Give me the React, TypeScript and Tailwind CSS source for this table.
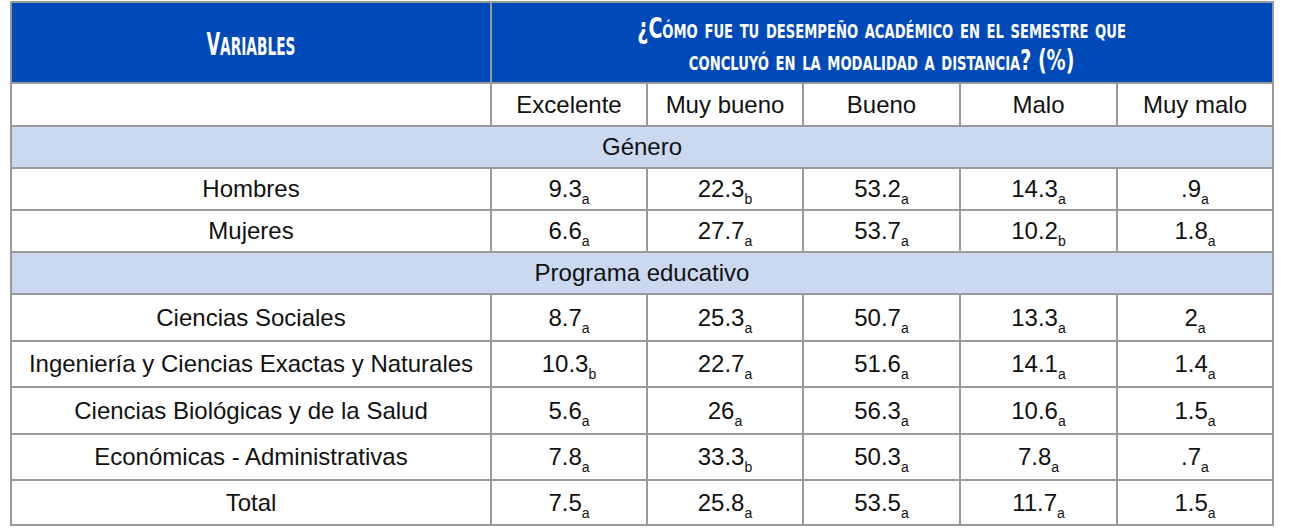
import React from 'react';

type Cell = [string, string];

interface Row {
  label: string;
  values: Cell[];
  h: string;
}

const head = ['Excelente', 'Muy bueno', 'Bueno', 'Malo', 'Muy malo'];

const genero: Row[] = [
  { label: 'Hombres', h: 'h-[42px]', values: [['9.3', 'a'], ['22.3', 'b'], ['53.2', 'a'], ['14.3', 'a'], ['.9', 'a']] },
  { label: 'Mujeres', h: 'h-[42px]', values: [['6.6', 'a'], ['27.7', 'a'], ['53.7', 'a'], ['10.2', 'b'], ['1.8', 'a']] },
];

const programa: Row[] = [
  { label: 'Ciencias Sociales', h: 'h-[47px]', values: [['8.7', 'a'], ['25.3', 'a'], ['50.7', 'a'], ['13.3', 'a'], ['2', 'a']] },
  { label: 'Ingeniería y Ciencias Exactas y Naturales', h: 'h-[46px]', values: [['10.3', 'b'], ['22.7', 'a'], ['51.6', 'a'], ['14.1', 'a'], ['1.4', 'a']] },
  { label: 'Ciencias Biológicas y de la Salud', h: 'h-[47px]', values: [['5.6', 'a'], ['26', 'a'], ['56.3', 'a'], ['10.6', 'a'], ['1.5', 'a']] },
  { label: 'Económicas - Administrativas', h: 'h-[46px]', values: [['7.8', 'a'], ['33.3', 'b'], ['50.3', 'a'], ['7.8', 'a'], ['.7', 'a']] },
];

const total: Row = { label: 'Total', h: 'h-[45px]', values: [['7.5', 'a'], ['25.8', 'a'], ['53.5', 'a'], ['11.7', 'a'], ['1.5', 'a']] };

const td = 'border-2 border-[#9a9a9a] text-center align-middle p-0';

const DataRow: React.FC<{ row: Row }> = ({ row }) => (
  <tr className={row.h}>
    <td className={td}>{row.label}</td>
    {row.values.map(([v, s], i) => (
      <td key={i} className={td}>
        {v}
        <sub className="text-[14px] relative top-[7px] align-baseline">{s}</sub>
      </td>
    ))}
  </tr>
);

const SectionRow: React.FC<{ label: string; h: string }> = ({ label, h }) => (
  <tr className={`${h} bg-[#cbd9f0]`}>
    <td colSpan={6} className={td}>
      {label}
    </td>
  </tr>
);

export default function App() {
  return (
    <div className="w-[1291px] h-[528px] bg-white pl-[10px] pt-[1px] font-['Liberation_Sans',Arial,sans-serif] text-[24px] text-[#111]">
      <table className="table-fixed border-collapse w-[1264px]">
        <colgroup>
          <col className="w-[480px]" />
          <col className="w-[156px]" />
          <col className="w-[156px]" />
          <col className="w-[157px]" />
          <col className="w-[157px]" />
          <col className="w-[156px]" />
        </colgroup>
        <thead>
          <tr className="h-[81px] bg-[#0049b9] text-white font-['Liberation_Sans_Narrow','DejaVu_Sans_Condensed',sans-serif] font-bold">
            <th className={`${td} leading-none pt-[3px]`}>
              <span className="inline-block scale-x-[0.61] whitespace-nowrap">
                <span className="text-[32px]">V</span>
                <span className="text-[25px]">ARIABLES</span>
              </span>
            </th>
            <th colSpan={5} className={`${td} text-[29px] leading-[32px] [font-variant:small-caps] pt-[2px]`}>
              <span className="inline-block scale-x-[0.73] whitespace-nowrap">
                ¿Cómo fue tu desempeño académico en el semestre que
                <br />
                concluyó en la modalidad a distancia? (%)
              </span>
            </th>
          </tr>
        </thead>
        <tbody>
          <tr className="h-[43px]">
            <td className={td}></td>
            {head.map((h) => (
              <td key={h} className={td}>
                {h}
              </td>
            ))}
          </tr>
          <SectionRow label="Género" h="h-[42px]" />
          {genero.map((r) => (
            <DataRow key={r.label} row={r} />
          ))}
          <SectionRow label="Programa educativo" h="h-[42px]" />
          {programa.map((r) => (
            <DataRow key={r.label} row={r} />
          ))}
          <DataRow row={total} />
        </tbody>
      </table>
    </div>
  );
}
